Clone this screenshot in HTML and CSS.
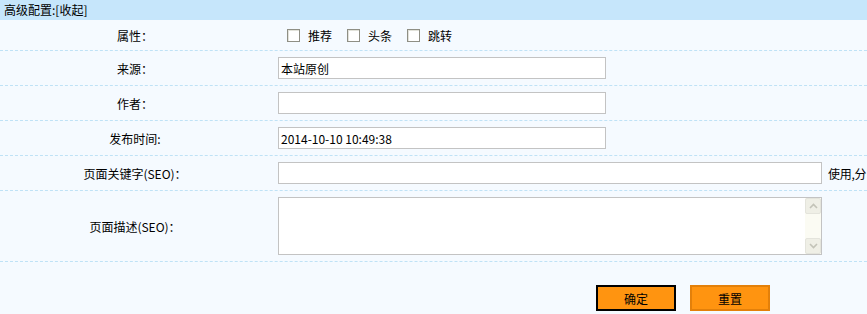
FILE: index.html
```html
<!DOCTYPE html>
<html lang="zh-CN">
<head>
    <meta charset="UTF-8">
    <meta name="viewport" content="width=device-width, initial-scale=1.0">
    <title>高级配置</title>
    <link rel="stylesheet" href="styles.css">
</head>
<body>
    <div class="panel">
        <div class="panel-head">高级配置:<a class="toggle" href="#">[收起]</a></div>

        <div class="form-row row-short">
            <div class="label">属性：</div>
            <div class="field">
                <label class="check"><input type="checkbox"><span>推荐</span></label>
                <label class="check"><input type="checkbox"><span>头条</span></label>
                <label class="check"><input type="checkbox"><span>跳转</span></label>
            </div>
        </div>

        <div class="form-row">
            <div class="label">来源：</div>
            <div class="field">
                <input class="text-input" type="text" value="本站原创">
            </div>
        </div>

        <div class="form-row">
            <div class="label">作者：</div>
            <div class="field">
                <input class="text-input" type="text" value="">
            </div>
        </div>

        <div class="form-row">
            <div class="label">发布时间:</div>
            <div class="field">
                <input class="text-input" type="text" value="2014-10-10 10:49:38">
            </div>
        </div>

        <div class="form-row">
            <div class="label">页面关键字(SEO)：</div>
            <div class="field">
                <input class="text-input wide" type="text" value="">
                <span class="hint">使用,分</span>
            </div>
        </div>

        <div class="form-row row-tall">
            <div class="label">页面描述(SEO)：</div>
            <div class="field">
                <div class="textarea-box">
                    <textarea class="textarea"></textarea>
                    <div class="scrollbar">
                        <div class="scroll-btn">
                            <svg width="9" height="6" viewBox="0 0 9 6"><path d="M1 5 L4.5 1.5 L8 5" fill="none" stroke="#c3c3b8" stroke-width="1.6"/></svg>
                        </div>
                        <div class="scroll-track"></div>
                        <div class="scroll-btn">
                            <svg width="9" height="6" viewBox="0 0 9 6"><path d="M1 1 L4.5 4.5 L8 1" fill="none" stroke="#c3c3b8" stroke-width="1.6"/></svg>
                        </div>
                    </div>
                </div>
            </div>
        </div>

        <div class="actions">
            <button class="btn btn-primary" type="submit">确定</button>
            <button class="btn" type="reset">重置</button>
        </div>
    </div>
</body>
</html>
```

FILE: styles.css
```css
body {
    margin: 0;
    background: #f5faff;
    color: #000;
    font-family: "Noto Sans CJK SC", sans-serif;
    font-size: 12px;
    overflow: hidden;
}

.panel {
    width: 867px;
    overflow: hidden;
}

.panel-head {
    height: 20px;
    line-height: 19px;
    padding-left: 4px;
    background: #c6e6fb;
}

.toggle {
    color: #000;
    text-decoration: none;
}

.form-row {
    display: flex;
    align-items: center;
    height: 34px;
    border-bottom: 1px dashed #bfe2f6;
    white-space: nowrap;
}

.row-short {
    height: 30px;
}

.row-tall {
    height: 70px;
}

.label {
    width: 270px;
    flex-shrink: 0;
    text-align: center;
}

.field {
    display: flex;
    align-items: center;
    padding-left: 8px;
}

.check {
    display: flex;
    align-items: center;
    margin-right: 15px;
}

.check:first-child {
    margin-left: 9px;
}

.check input {
    appearance: none;
    width: 13px;
    height: 13px;
    margin: 0 8px 0 0;
    border: 1px solid #8f8f85;
    background: #fff;
    box-shadow: inset 1px 1px 0 #e2e2da;
}

.text-input {
    box-sizing: border-box;
    width: 328px;
    height: 22px;
    margin: 0;
    padding: 0 2px;
    border: 1px solid #c3c3c3;
    background: #fff;
    font-family: "Noto Sans CJK SC", sans-serif;
    font-size: 12px;
    color: #000;
    outline: none;
}

.text-input.wide {
    width: 544px;
}

.hint {
    margin-left: 6px;
    letter-spacing: -0.3px;
}

.textarea-box {
    box-sizing: border-box;
    display: flex;
    width: 544px;
    height: 58px;
    border: 1px solid #c3c3c3;
    background: #fff;
}

.textarea {
    flex: 1;
    border: 0;
    margin: 0;
    padding: 2px;
    resize: none;
    outline: none;
    background: #fff;
    font-family: "Noto Sans CJK SC", sans-serif;
    font-size: 12px;
}

.scrollbar {
    display: flex;
    flex-direction: column;
    width: 16px;
    background: #fbfbf3;
}

.scroll-btn {
    box-sizing: border-box;
    display: flex;
    align-items: center;
    justify-content: center;
    height: 16px;
    border: 1px solid #e4e4dc;
    border-radius: 2px;
    background: #efefe6;
}

.scroll-track {
    flex: 1;
}

.actions {
    display: flex;
    gap: 14px;
    padding: 23px 0 0 596px;
}

.btn {
    box-sizing: border-box;
    width: 80px;
    height: 26px;
    margin: 0;
    border: 2px solid #e3800a;
    background: #ff9410;
    color: #000;
    font-family: "Noto Sans CJK SC", sans-serif;
    font-size: 12px;
    cursor: pointer;
}

.btn-primary {
    border-color: #000;
}
```
